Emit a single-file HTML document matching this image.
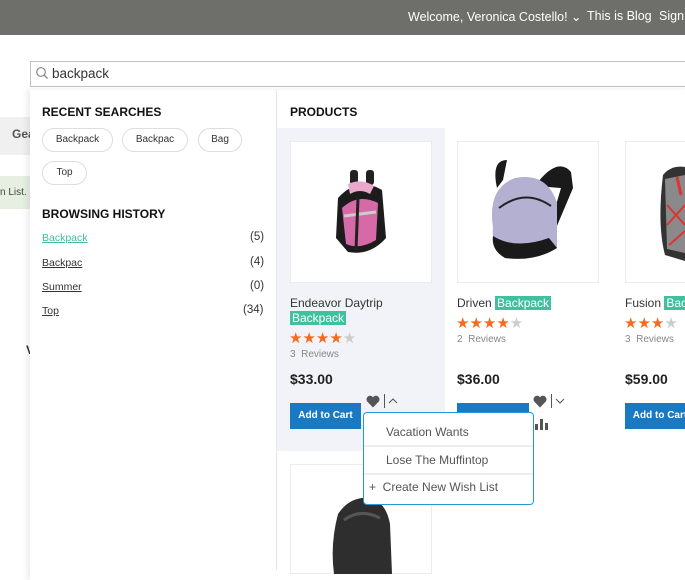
<!DOCTYPE html>
<html><head><style>
*{margin:0;padding:0;box-sizing:border-box}
body{width:685px;height:568px;overflow:hidden;position:relative;background:#fff;font-family:"Liberation Sans",sans-serif;color:#333}
.a{position:absolute;white-space:nowrap}
.top{left:0;top:0;width:685px;height:35px;background:#6e6f6b;color:#fff;font-size:12.5px}
.pill{position:absolute;height:24px;border:1px solid #ddd;border-radius:12px;font-size:10px;line-height:22px;text-align:center;color:#333}
.h{font-weight:bold;font-size:12px;color:#111}
.hist{font-size:10.5px;text-decoration:underline;color:#333}
.cnt{font-size:11.5px;color:#333;right:0}
.img{border:1px solid #ececec;background:#fff;width:142px;height:142px}
.nm{font-size:12px;color:#333}
.hl{background:#3fc1a0;color:#fff;padding:0 2px}
.st{font-size:15px;letter-spacing:0px;color:#f56a1c}
.rv{font-size:10px;color:#888}
.pr{font-size:14px;font-weight:bold;color:#222}
.btn{background:#1979c3;color:#fff;font-size:10px;font-weight:bold;height:26px;line-height:26px;text-align:center}
.mi{position:absolute;left:0;width:170px;font-size:12px;color:#555;padding-left:22px}
</style></head><body>
<div class="a top"><span class="a" style="left:408px;top:9px">Welcome, Veronica Costello! ⌄</span><span class="a" style="left:587px;top:9px">This is Blog</span><span class="a" style="left:659px;top:9px">Sign</span></div>
<div class="a" style="left:0;top:117px;width:30px;height:38px;background:#f0f0f0"></div>
<div class="a" style="left:12px;top:127px;font-size:12px;font-weight:bold;color:#555">Gea</div>
<div class="a" style="left:0;top:176px;width:30px;height:33px;background:#e6efe2"></div>
<div class="a" style="left:0;top:187px;font-size:10px;color:#444">n List.</div>
<div class="a" style="left:26px;top:343px;font-size:12px;font-weight:bold;color:#333">V</div>
<div class="a" style="left:30px;top:61px;width:660px;height:26px;border:1px solid #c2c2c2;background:#fff"></div>
<svg class="a" style="left:35px;top:66px" width="14" height="14" viewBox="0 0 14 14"><circle cx="6" cy="6" r="4.3" fill="none" stroke="#888" stroke-width="1.2"/><path d="M9 9l3.5 3.5" stroke="#888" stroke-width="1.3"/></svg>
<div class="a" style="left:52px;top:66px;font-size:13.5px;color:#333">backpack</div>
<div class="a" style="left:30px;top:90px;width:660px;height:490px;background:#fff;box-shadow:-3px 0 6px rgba(0,0,0,.08)"></div>
<div class="a" style="left:276px;top:90px;width:1px;height:480px;background:#e6e6e6"></div>
<div class="a h" style="left:42px;top:105px">RECENT SEARCHES</div>
<div class="pill" style="left:42px;top:128px;width:71px">Backpack</div>
<div class="pill" style="left:122px;top:128px;width:66px">Backpac</div>
<div class="pill" style="left:198px;top:128px;width:44px">Bag</div>
<div class="pill" style="left:42px;top:161px;width:45px">Top</div>
<div class="a h" style="left:42px;top:207px">BROWSING HISTORY</div>
<div class="a hist" style="left:42px;top:232px;color:#3fbf9f">Backpack</div><div class="a cnt" style="left:250px;top:231px">(5)</div>
<div class="a hist" style="left:42px;top:257px">Backpac</div><div class="a cnt" style="left:250px;top:256px">(4)</div>
<div class="a hist" style="left:42px;top:281px">Summer</div><div class="a cnt" style="left:250px;top:280px">(0)</div>
<div class="a hist" style="left:42px;top:305px">Top</div><div class="a cnt" style="left:243px;top:304px">(34)</div>
<div class="a h" style="left:290px;top:105px">PRODUCTS</div>
<div class="a" style="left:277px;top:128px;width:168px;height:323px;background:#f2f3f8"></div>
<div class="a img" style="left:290px;top:141px"></div>
<svg class="a" style="left:330px;top:168px" width="60" height="90" viewBox="0 0 60 90"><rect x="20" y="2" width="8" height="15" rx="3" fill="#222"/><rect x="36" y="2" width="8" height="15" rx="3" fill="#222"/><path d="M8 30 Q28 8 52 22 L56 70 Q40 88 18 84 L6 70Z" fill="#1c1c1c"/><path d="M12 40 Q28 25 48 35 L46 72 Q30 82 16 76Z" fill="#d56aa6"/><path d="M18 16 Q32 10 44 18 L40 26 Q30 20 20 26Z" fill="#e9a8cc"/><path d="M14 48 L46 44" stroke="#ccc" stroke-width="3"/><path d="M28 30 L26 82" stroke="#222" stroke-width="3"/></svg>
<div class="a img" style="left:457px;top:141px"></div>
<svg class="a" style="left:485px;top:158px" width="90" height="110" viewBox="0 0 90 110"><path d="M12 30 Q6 2 22 2 L18 22Z" fill="#1a1a1a"/><path d="M58 28 Q80 -2 94 14 L96 30 L74 82 L70 78 L84 30Z" fill="#1a1a1a" transform="translate(-8,0)"/><path d="M8 70 Q2 30 30 20 Q62 14 72 45 L72 90 Q50 102 20 98 Q6 90 8 70Z" fill="#b3b0d1"/><path d="M8 78 Q30 92 64 80 L72 90 Q50 104 20 100 Q6 92 8 78Z" fill="#1a1a1a"/><path d="M14 50 Q40 30 66 48" stroke="#222" stroke-width="2" fill="none"/></svg>
<div class="a img" style="left:625px;top:141px"></div>
<svg class="a" style="left:657px;top:165px" width="28" height="100" viewBox="0 0 28 100"><path d="M6 10 Q14 0 28 2 L28 96 L8 90 Q0 60 6 10Z" fill="#333"/><path d="M8 14 L28 10 L28 88 L10 84Z" fill="#8a8a8a"/><path d="M10 40 L28 60 M10 60 L28 40 M12 80 L28 66" stroke="#d33" stroke-width="2"/><path d="M20 12 L24 30" stroke="#d33" stroke-width="3"/></svg>
<div class="a nm" style="left:290px;top:296px">Endeavor Daytrip</div>
<div class="a nm" style="left:290px;top:311px"><span class="hl">Backpack</span></div>
<div class="a st" style="left:289px;top:329px">★★★★<span style="color:#ccc">★</span></div>
<div class="a rv" style="left:290px;top:349px">3 &nbsp;Reviews</div>
<div class="a pr" style="left:290px;top:371px">$33.00</div>
<div class="a btn" style="left:290px;top:403px;width:71px">Add to Cart</div>
<div class="a nm" style="left:457px;top:296px">Driven <span class="hl">Backpack</span></div>
<div class="a st" style="left:456px;top:314px">★★★★<span style="color:#ccc">★</span></div>
<div class="a rv" style="left:457px;top:334px">2 &nbsp;Reviews</div>
<div class="a pr" style="left:457px;top:371px">$36.00</div>
<div class="a btn" style="left:457px;top:403px;width:72px"></div>
<div class="a nm" style="left:625px;top:296px">Fusion <span class="hl">Backpack</span></div>
<div class="a st" style="left:624px;top:314px">★★★<span style="color:#ccc">★</span></div>
<div class="a rv" style="left:625px;top:334px">3 &nbsp;Reviews</div>
<div class="a pr" style="left:625px;top:371px">$59.00</div>
<div class="a btn" style="left:625px;top:403px;width:70px">Add to Cart</div>
<svg class="a" style="left:366px;top:395px" width="14" height="13" viewBox="0 0 14 13"><path d="M7 12.5L1.2 6.5A3.4 3.4 0 0 1 7 2.2A3.4 3.4 0 0 1 12.8 6.5Z" fill="#555"/></svg>
<div class="a" style="left:384px;top:394px;width:1px;height:14px;background:#555"></div>
<svg class="a" style="left:388px;top:397px" width="10" height="7"><path d="M1 6L5 2L9 6" stroke="#555" fill="none"/></svg>
<svg class="a" style="left:533px;top:395px" width="14" height="13" viewBox="0 0 14 13"><path d="M7 12.5L1.2 6.5A3.4 3.4 0 0 1 7 2.2A3.4 3.4 0 0 1 12.8 6.5Z" fill="#555"/></svg>
<div class="a" style="left:551px;top:394px;width:1px;height:14px;background:#555"></div>
<svg class="a" style="left:555px;top:398px" width="10" height="7"><path d="M1 1L5 5L9 1" stroke="#555" fill="none"/></svg>
<svg class="a" style="left:534px;top:418px" width="14" height="12"><rect x="1" y="6" width="3" height="6" fill="#555"/><rect x="6" y="1" width="3" height="11" fill="#555"/><rect x="11" y="5" width="3" height="7" fill="#555"/></svg>
<div class="a img" style="left:290px;top:464px;height:110px"></div>
<svg class="a" style="left:330px;top:494px" width="65" height="80" viewBox="0 0 65 80"><path d="M8 20 Q20 2 40 4 Q56 8 60 30 L62 80 L4 80 Q0 50 8 20Z" fill="#2e2e2e"/><path d="M14 26 Q30 14 50 24" stroke="#555" stroke-width="3" fill="none"/></svg>
<div class="a" style="left:363px;top:412px;width:171px;height:93px;border:1px solid #1e9ae0;border-radius:4px;background:#fff;overflow:hidden">
<div class="mi" style="top:12px">Vacation Wants</div>
<div class="a" style="left:0;top:32px;width:171px;height:2px;background:#ececec"></div>
<div class="mi" style="top:40px">Lose The Muffintop</div>
<div class="a" style="left:0;top:60px;width:171px;height:2px;background:#ececec"></div>
<div class="mi" style="top:67px;padding-left:5px">+ &nbsp;Create New Wish List</div>
</div>
</body></html>
